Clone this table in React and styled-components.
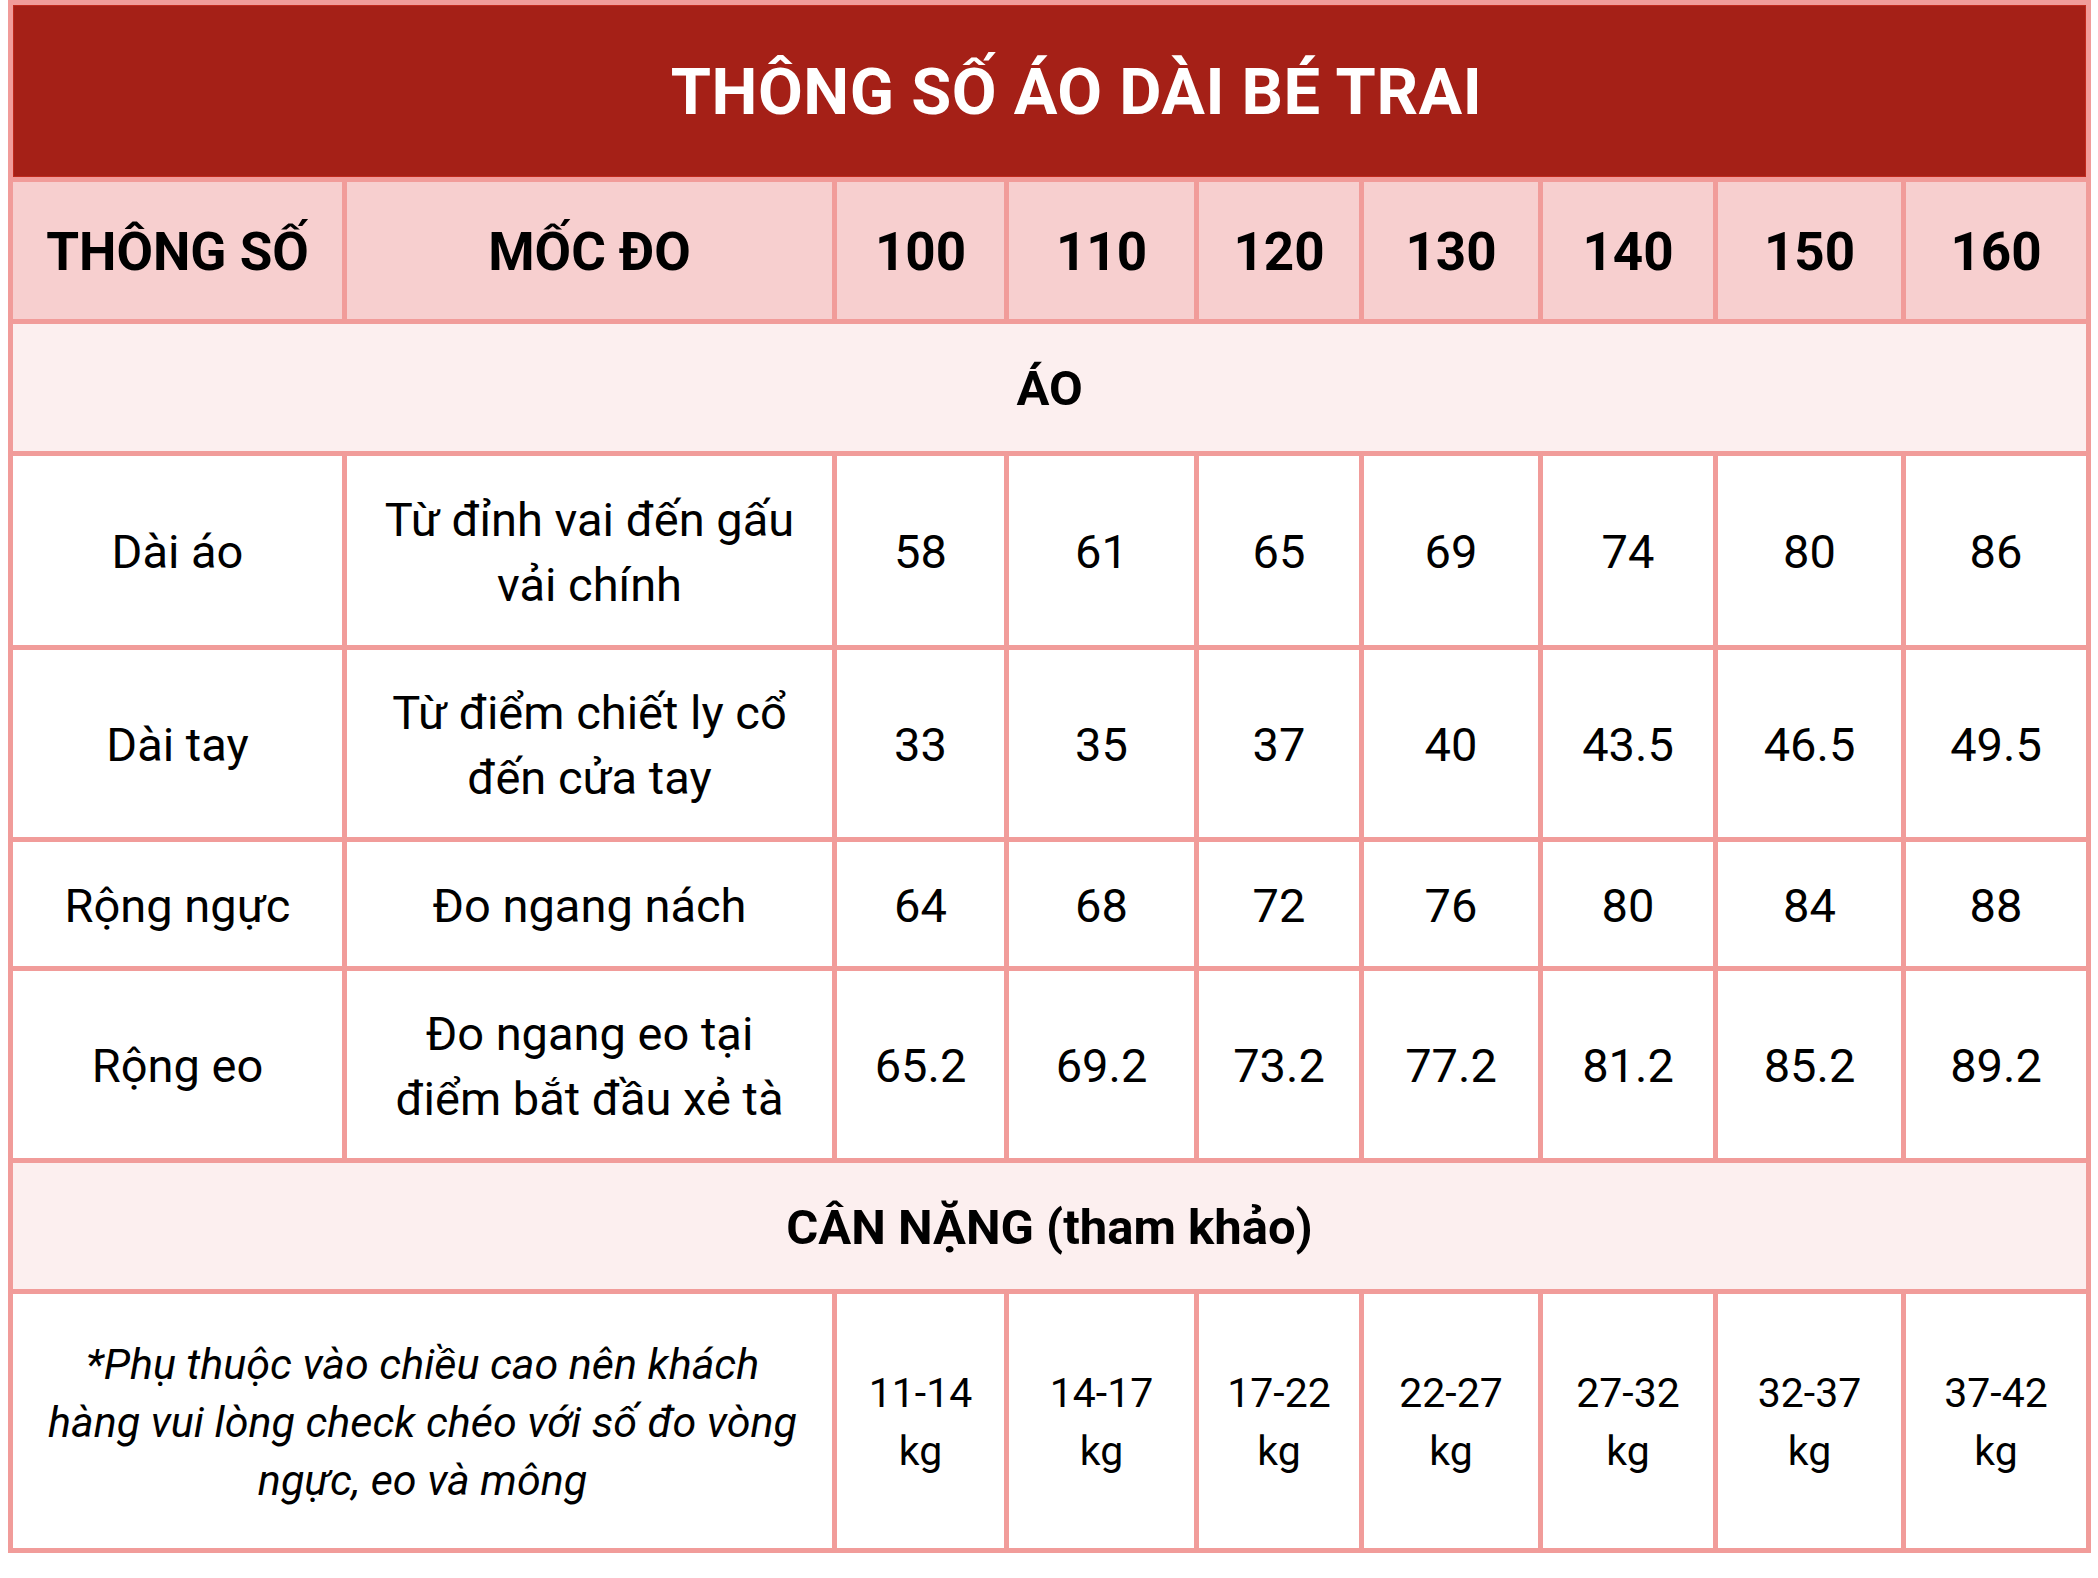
import React from "react";
import styled, { createGlobalStyle } from "styled-components";

const GlobalStyle = createGlobalStyle`
  html, body {
    margin: 0;
    padding: 0;
    background: #ffffff;
  }
  body {
    font-family: Roboto, "Liberation Sans", sans-serif;
    color: #000;
  }
`;

const Page = styled.div`
  padding: 0 0 0 8px;
`;

const Chart = styled.table`
  width: 2083px;
  border-collapse: collapse;
  table-layout: fixed;
  font-family: Roboto, "Liberation Sans", sans-serif;
  color: #000;
`;

const Row = styled.tr`
  height: ${(p) => p.$h}px;
`;

const Title = styled.th`
  background: #a52017;
  color: #ffffff;
  font-size: 65px;
  font-weight: 700;
  letter-spacing: 0.5px;
  text-align: center;
  vertical-align: middle;
  border: 5px solid #f19c9a;
  box-shadow: inset 0 0 0 1px #c0291d;
  padding: 2px 0 0 54px;
`;

const HeadCell = styled.th`
  background: #f7cfcf;
  font-size: 53px;
  font-weight: 700;
  text-align: center;
  vertical-align: middle;
  border: 5px solid #f19c9a;
  padding: 2px 0 0;
`;

const SectionCell = styled.td`
  background: #fcefef;
  font-size: 49px;
  font-weight: 700;
  text-align: center;
  vertical-align: middle;
  border: 5px solid #f19c9a;
  padding: 2px 0 0;
`;

const Cell = styled.td`
  background: #ffffff;
  font-size: ${(p) => (p.$italic ? 43 : p.$small ? 41 : 47)}px;
  line-height: ${(p) => (p.$small ? 58 : 65)}px;
  font-style: ${(p) => (p.$italic ? "italic" : "normal")};
  font-weight: 400;
  text-align: center;
  vertical-align: middle;
  border: 5px solid #f19c9a;
  padding: 2px ${(p) => (p.$italic ? 16 : 0)}px 0;
`;

const colWidths = [334, 490, 172, 190, 165, 179, 175, 188, 185];
const sizes = ["100", "110", "120", "130", "140", "150", "160"];

const measures = [
  {
    name: "Dài áo",
    point: ["Từ đỉnh vai đến gấu", "vải chính"],
    values: ["58", "61", "65", "69", "74", "80", "86"],
    h: 194,
  },
  {
    name: "Dài tay",
    point: ["Từ điểm chiết ly cổ", "đến cửa tay"],
    values: ["33", "35", "37", "40", "43.5", "46.5", "49.5"],
    h: 192,
  },
  {
    name: "Rộng ngực",
    point: ["Đo ngang nách"],
    values: ["64", "68", "72", "76", "80", "84", "88"],
    h: 129,
  },
  {
    name: "Rộng eo",
    point: ["Đo ngang eo tại", "điểm bắt đầu xẻ tà"],
    values: ["65.2", "69.2", "73.2", "77.2", "81.2", "85.2", "89.2"],
    h: 192,
  },
];

const weights = ["11-14", "14-17", "17-22", "22-27", "27-32", "32-37", "37-42"];

const lines = (list) =>
  list.map((line, i) => (
    <React.Fragment key={i}>
      {i > 0 && <br />}
      {line}
    </React.Fragment>
  ));

const App = () => {
  return (
    <Page>
      <GlobalStyle />
      <Chart>
        <colgroup>
          {colWidths.map((w, i) => (
            <col key={i} style={{ width: w }} />
          ))}
        </colgroup>
        <thead>
          <Row $h={177}>
            <Title colSpan={9}>THÔNG SỐ ÁO DÀI BÉ TRAI</Title>
          </Row>
          <Row $h={142}>
            <HeadCell>THÔNG SỐ</HeadCell>
            <HeadCell>MỐC ĐO</HeadCell>
            {sizes.map((s) => (
              <HeadCell key={s}>{s}</HeadCell>
            ))}
          </Row>
        </thead>
        <tbody>
          <Row $h={132}>
            <SectionCell colSpan={9}>ÁO</SectionCell>
          </Row>
          {measures.map((m) => (
            <Row key={m.name} $h={m.h}>
              <Cell>{m.name}</Cell>
              <Cell>{lines(m.point)}</Cell>
              {m.values.map((v, i) => (
                <Cell key={i}>{v}</Cell>
              ))}
            </Row>
          ))}
          <Row $h={131}>
            <SectionCell colSpan={9}>CÂN NẶNG (tham khảo)</SectionCell>
          </Row>
          <Row $h={259}>
            <Cell colSpan={2} $small $italic>
              {lines([
                "*Phụ thuộc vào chiều cao nên khách",
                "hàng vui lòng check chéo với số đo vòng",
                "ngực, eo và mông",
              ])}
            </Cell>
            {weights.map((w) => (
              <Cell key={w} $small>
                {lines([w, "kg"])}
              </Cell>
            ))}
          </Row>
        </tbody>
      </Chart>
    </Page>
  );
};

export default App;
